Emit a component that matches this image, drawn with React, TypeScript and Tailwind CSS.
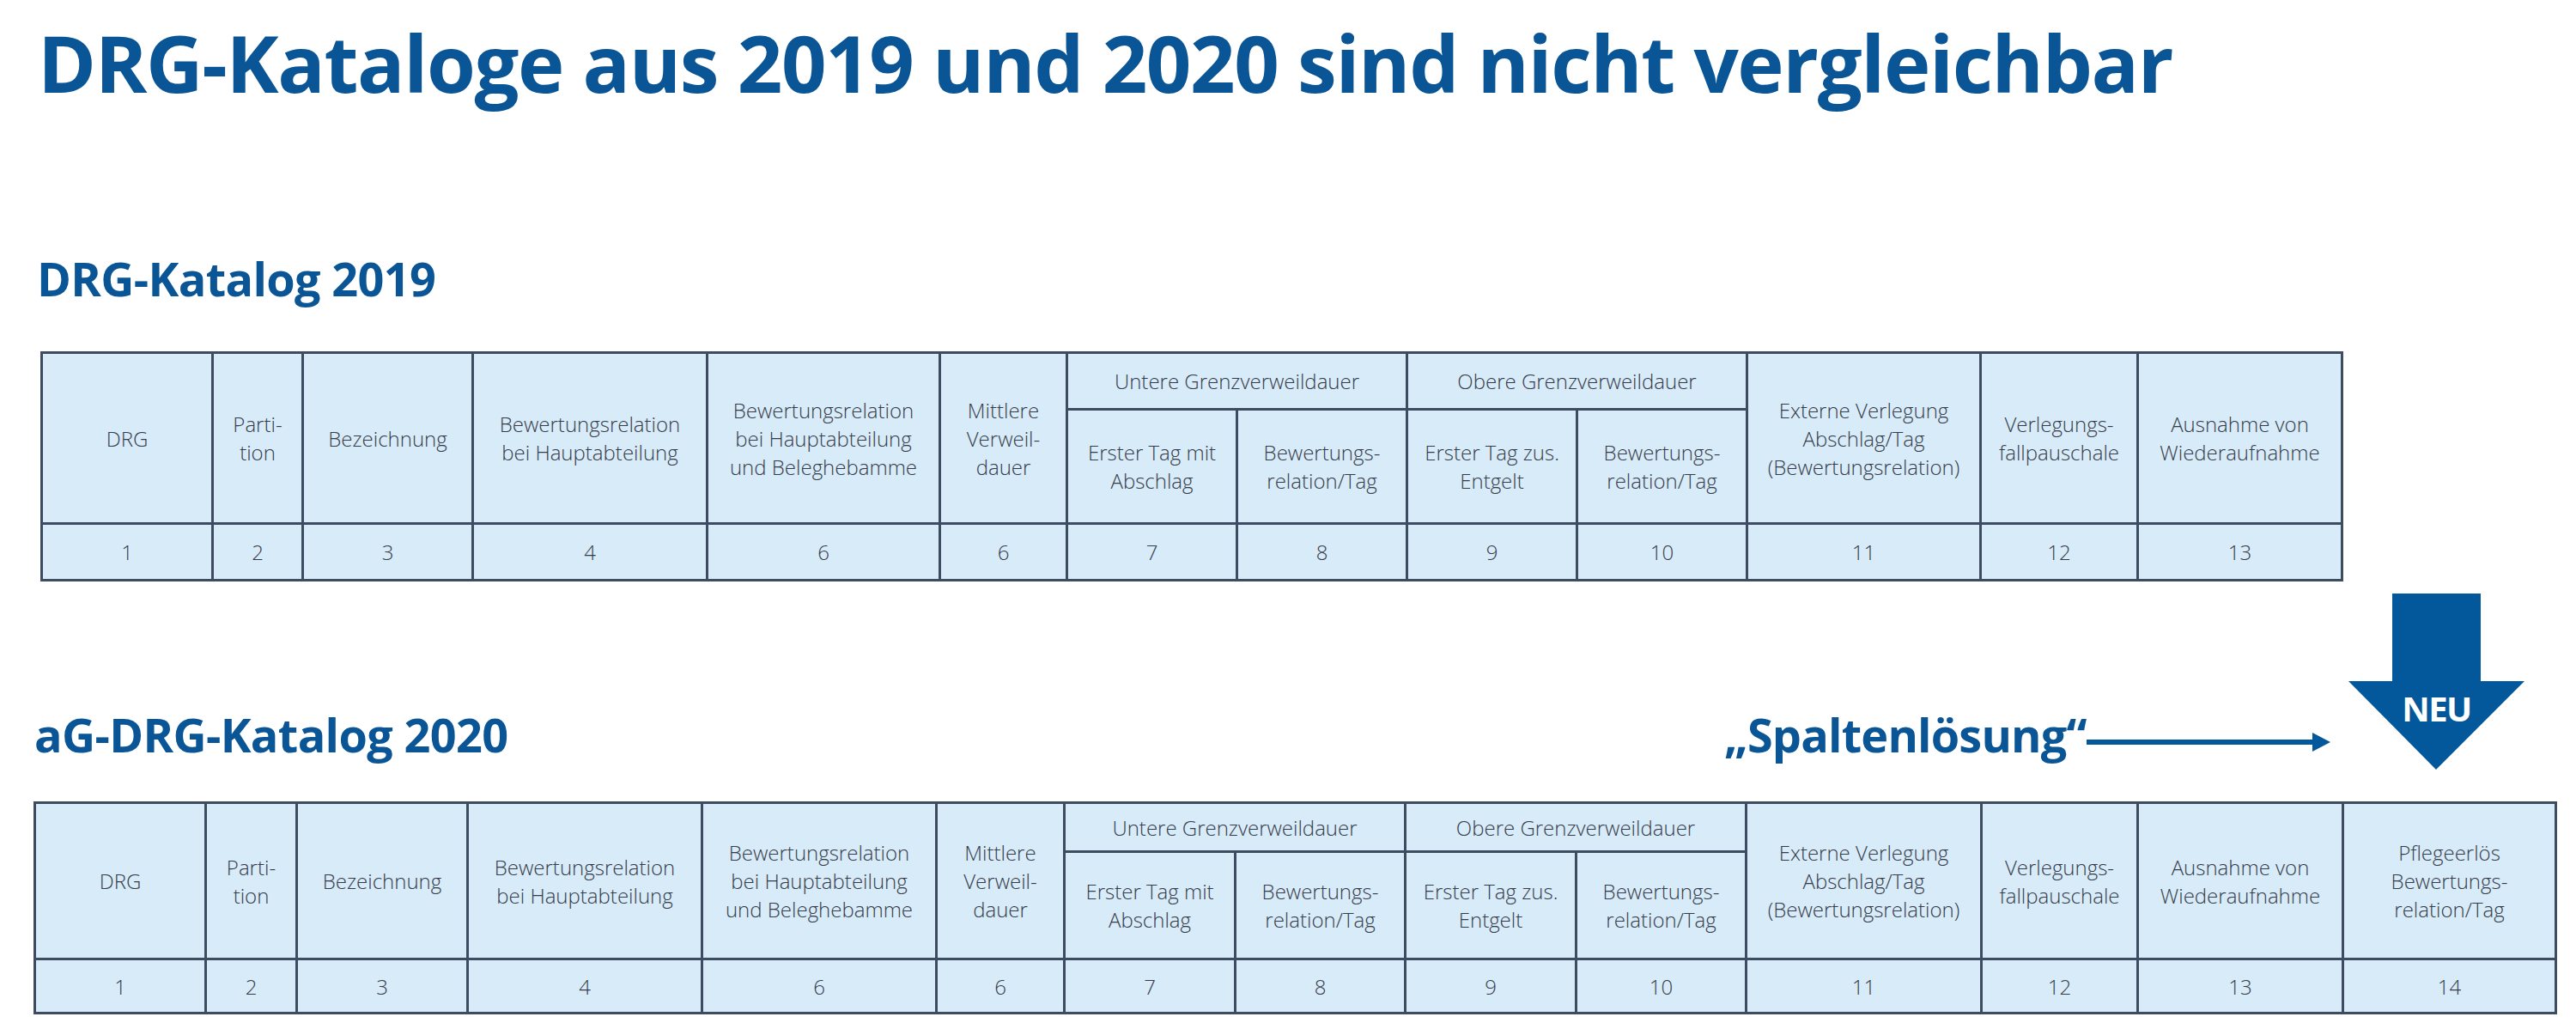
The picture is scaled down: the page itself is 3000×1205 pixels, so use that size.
import React from "react";

type Cell = { text: React.ReactNode; cls?: string };

const br = (...lines: string[]) =>
  lines.map((l, i) => (
    <React.Fragment key={i}>
      {i > 0 && <br />}
      {l}
    </React.Fragment>
  ));

function headerCells(withPflege: boolean): Cell[] {
  const cells: Cell[] = [
    { text: "DRG", cls: "row-span-2" },
    { text: br("Parti-", "tion"), cls: "row-span-2" },
    { text: "Bezeichnung", cls: "row-span-2" },
    { text: br("Bewertungsrelation", "bei Hauptabteilung"), cls: "row-span-2" },
    { text: br("Bewertungsrelation", "bei Hauptabteilung", "und Beleghebamme"), cls: "row-span-2" },
    { text: br("Mittlere", "Verweil-", "dauer"), cls: "row-span-2" },
    { text: "Untere Grenzverweildauer", cls: "col-span-2" },
    { text: "Obere Grenzverweildauer", cls: "col-span-2" },
    { text: br("Externe Verlegung", "Abschlag/Tag", "(Bewertungsrelation)"), cls: "row-span-2" },
    { text: br("Verlegungs-", "fallpauschale"), cls: "row-span-2" },
    { text: br("Ausnahme von", "Wiederaufnahme"), cls: "row-span-2" },
  ];
  if (withPflege) {
    cells.push({ text: br("Pflegeerlös", "Bewertungs-", "relation/Tag"), cls: "row-span-2" });
  }
  cells.push(
    { text: br("Erster Tag mit", "Abschlag") },
    { text: br("Bewertungs-", "relation/Tag") },
    { text: br("Erster Tag zus.", "Entgelt") },
    { text: br("Bewertungs-", "relation/Tag") }
  );
  const nums = ["1", "2", "3", "4", "6", "6", "7", "8", "9", "10", "11", "12", "13"];
  if (withPflege) nums.push("14");
  nums.forEach((n) => cells.push({ text: n }));
  return cells;
}

function TableCells({ withPflege }: { withPflege: boolean }) {
  return (
    <>
      {headerCells(withPflege).map((c, i) => (
        <div
          key={i}
          className={
            "flex items-center justify-center bg-[#d8ebf8] text-center text-[24px] font-light leading-[33px] text-[#353b4a] " +
            (c.cls ?? "")
          }
        >
          <span>{c.text}</span>
        </div>
      ))}
    </>
  );
}

export default function App() {
  return (
    <div
      className="relative h-[1205px] w-[3000px] overflow-hidden bg-white"
      style={{ fontFamily: '"Open Sans", "Noto Sans", sans-serif' }}
    >
      <h1 className="ml-[44px] mt-[27px] text-[92px] font-bold leading-none tracking-[-0.015em] text-[#0a5596] whitespace-nowrap">
        DRG-Kataloge aus 2019 und 2020 sind nicht vergleichbar
      </h1>

      <h2 className="ml-[43px] mt-[178px] text-[54px] font-bold leading-none tracking-[-0.012em] text-[#0a5596] whitespace-nowrap">
        DRG-Katalog 2019
      </h2>

      <div className="ml-[47px] mt-[58px] grid w-fit grid-cols-[196px_102px_195px_270px_268px_145px_195px_195px_195px_195px_269px_180px_235px] grid-rows-[63px_130px_63px] gap-[3px] bg-[#3e4c61] p-[3px]">
        <TableCells withPflege={false} />
      </div>

      <div className="mt-[14px] flex items-start">
        <h2 className="ml-[40px] mt-[137px] w-[1968px] shrink-0 text-[54px] font-bold leading-none tracking-[-0.012em] text-[#0a5596] whitespace-nowrap">
          aG-DRG-Katalog 2020
        </h2>
        <div className="mt-[137px] flex w-[422px] shrink-0 items-start">
          <span className="text-[54px] font-bold leading-none tracking-[-0.015em] text-[#0a5596] whitespace-nowrap">
            „Spaltenlösung“
          </span>
        </div>
        <svg className="mt-[162px] shrink-0" width="284" height="22" viewBox="0 0 284 22">
          <rect x="0" y="8" width="266" height="6" fill="#03589b" />
          <polygon points="263,0 284,11 263,22" fill="#03589b" />
        </svg>
        <div className="relative ml-[21px] h-[205px] w-[205px] shrink-0">
          <svg width="205" height="205" viewBox="0 0 205 205" className="block">
            <polygon
              points="51,0 154,0 154,102 205,102 102,205 0,102 51,102"
              fill="#03589b"
            />
          </svg>
          <span className="absolute left-0 right-0 top-[114px] text-center text-[40px] font-bold leading-none tracking-[-0.04em] text-white">
            NEU
          </span>
        </div>
      </div>

      <div className="ml-[39px] mt-[37px] grid w-fit grid-cols-[196px_103px_196px_270px_270px_146px_196px_195px_196px_195px_271px_179px_236px_245px] grid-rows-[54px_122px_60px] gap-[3px] bg-[#3e4c61] p-[3px]">
        <TableCells withPflege={true} />
      </div>
    </div>
  );
}
